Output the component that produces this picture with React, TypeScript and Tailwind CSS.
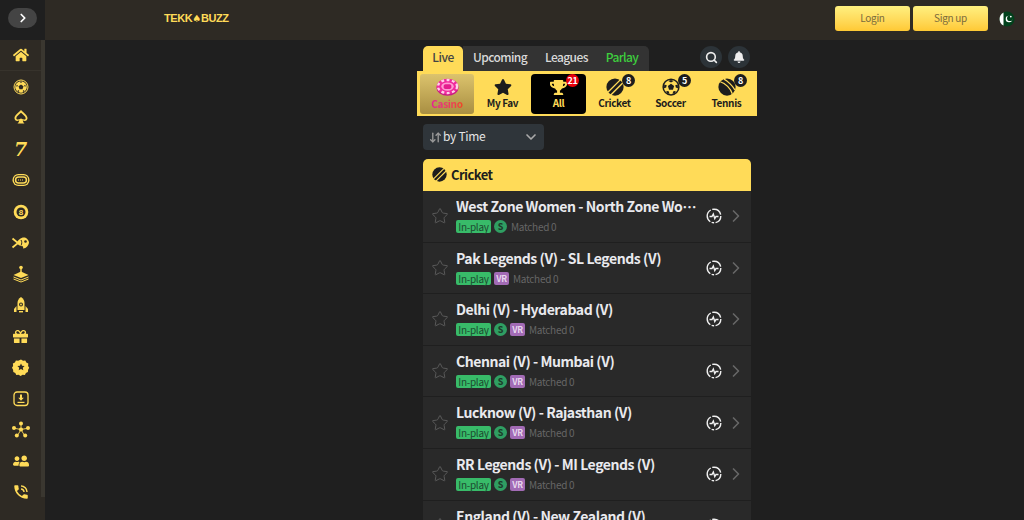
import { ChevronDown, ChevronRight, Search, Star, ArrowDownUp } from "lucide-react";
import { FaBell, FaHome, FaStar, FaGift, FaUserFriends, FaTrophy } from "react-icons/fa";
import { MdPhoneInTalk } from "react-icons/md";

const Y = "#ffdb58";

function CricketBall({ size = 18, color = "#1d1d1d", bg = Y }: { size?: number; color?: string; bg?: string }) {
  return (
    <svg width={size} height={size} viewBox="0 0 24 24">
      <circle cx="12" cy="12" r="11.5" fill={color} />
      <path d="M6 23 L23 6" stroke={bg} strokeWidth="1.8" />
      <path d="M2.5 19 L19 2.5" stroke={bg} strokeWidth="1.8" />
    </svg>
  );
}

function SoccerBall({ size = 18 }: { size?: number }) {
  return (
    <svg width={size} height={size} viewBox="0 0 24 24">
      <circle cx="12" cy="12" r="11.5" fill="#1d1d1d" />
      <circle cx="12" cy="12" r="9.5" fill={Y} />
      <path d="M12 7.5l4.2 3-1.6 5h-5.2l-1.600-5z" fill="#1d1d1d" />
      <path d="M12 2.500l3.500 1.600-3.500 2-3.500-2zM21 9l.4 4.500-3-1-.6-3.200zM3 9l-.4 4.500 3-1 .6-3.200zM7.500 21l-2-3.500 3-.3 1.600 3.300zM16.500 21l2-3.500-3-.3-1.600 3.300z" fill="#1d1d1d" />
    </svg>
  );
}

function TennisBall({ size = 18 }: { size?: number }) {
  return (
    <svg width={size} height={size} viewBox="0 0 24 24">
      <circle cx="12" cy="12" r="11.5" fill="#1d1d1d" />
      <path d="M3 5 C10 7 17 14 19 21" stroke={Y} strokeWidth="1.7" fill="none" />
      <path d="M8 1.500 C13 4 20 11 22.500 16" stroke={Y} strokeWidth="1.7" fill="none" />
    </svg>
  );
}

function CasinoChip() {
  return (
    <svg width="23" height="18" viewBox="0 0 24 18">
      <ellipse cx="12" cy="10" rx="11.500" ry="8" fill="#c81e82" />
      <ellipse cx="12" cy="8.500" rx="11.500" ry="8" fill="#f02a9c" />
      <ellipse cx="12" cy="8.500" rx="10" ry="6.800" fill="none" stroke="#ffd0ea" strokeWidth="2.400" strokeDasharray="3 2.500" />
      <ellipse cx="12" cy="8.500" rx="6.500" ry="4.300" fill="#ff9ad2" />
      <rect x="8" y="6" width="8" height="5" rx="1.800" fill="#e41d8e" />
    </svg>
  );
}

function LiveIcon() {
  return (
    <svg width="16" height="16" viewBox="0 0 16 16" fill="none" stroke="#f1f1f1">
      <circle cx="8" cy="8" r="6.800" strokeWidth="1.400" strokeDasharray="9 1.500 2.500 1.500 14 1.500 11 1.500" />
      <path d="M3.500 8.500h2.500l1.300-2.500 1.500 4.500 1.200-2h2.500" strokeWidth="1.400" />
    </svg>
  );
}

function PakFlag() {
  return (
    <svg width="16" height="16" viewBox="0 0 16 16">
      <circle cx="8" cy="8" r="7.500" fill="#01411c" />
      <path d="M4.500 1.400A7.500 7.500 0 0 0 4.500 14.600z" fill="#fff" />
      <circle cx="10" cy="8" r="3.300" fill="#fff" />
      <circle cx="11" cy="7.200" r="2.900" fill="#01411c" />
      <circle cx="11.800" cy="5.600" r=".9" fill="#fff" />
    </svg>
  );
}

const SvgIcon = ({ children }: { children: React.ReactNode }) => (
  <svg width={22} height={22} viewBox="0 0 22 22" fill={Y}>
    {children}
  </svg>
);

const sideIcons: React.ReactNode[] = [
  <FaHome key="home" size={16} color={Y} />,
  <SvgIcon key="ball">
    <circle cx="11" cy="11" r="7" fill="none" stroke={Y} strokeWidth="1" />
    <circle cx="11" cy="11" r="5.800" />
    <path d="M11 8.500l2.500 1.800-1 3h-3l-1-3z" fill="#2e2a24" />
    <path d="M11 5.500v1.200M6.500 9.500l1 .5M15.500 9.500l-1 .5M8 15.500l.8-1M14 15.500l-.8-1" stroke="#2e2a24" strokeWidth="1.400" />
  </SvgIcon>,
  <SvgIcon key="spade">
    <path d="M11 3c2.500 3 6.500 4.700 6.500 8.300 0 2.400-2.700 3.300-4.700 2 .1 1.200.5 2.200 1.700 3.200h-7c1.200-1 1.600-2 1.700-3.200-2 1.300-4.700.4-4.700-2C4.500 7.700 8.500 6 11 3z" />
    <path d="M11 5.800c1.800 1.900 4.700 3.400 4.700 5.400 0 1.500-2.200 1.700-4.700.3-2.500 1.400-4.700 1.200-4.700-.3 0-2 2.900-3.500 4.700-5.400z" fill="#2e2a24" />
  </SvgIcon>,
  <span key="seven" className="text-[19px] font-bold italic leading-[22px] text-[#ffdb58] font-['DejaVu_Serif',serif]">7</span>,
  <SvgIcon key="track">
    <rect x="2.500" y="5" width="17" height="12" rx="5.800" />
    <rect x="3.800" y="6.200" width="14.400" height="9.600" rx="4.700" fill="#2e2a24" />
    <rect x="4.800" y="7.200" width="12.400" height="7.600" rx="3.800" />
    <rect x="6.300" y="8.700" width="9.400" height="4.600" rx="2.300" fill="#2e2a24" />
    <path d="M8 11h6" stroke={Y} strokeWidth="1.200" strokeDasharray="1 1" />
  </SvgIcon>,
  <SvgIcon key="eight">
    <circle cx="11" cy="11" r="7.300" />
    <circle cx="11" cy="11" r="4.500" fill="#2e2a24" />
    <text x="11" y="14" textAnchor="middle" fontSize="8" fontWeight="700" fill={Y} fontFamily="Liberation Sans, sans-serif">8</text>
  </SvgIcon>,
  <SvgIcon key="fish">
    <path d="M2.500 6.500L8 11l-5.500 4.500" fill="none" stroke={Y} strokeWidth="1.800" />
    <path d="M6.500 11c1.500-3 4.200-5.500 7.500-5.500 2.800 0 4.700 2.700 5 5-.3 2.700-2.500 6-6 6 .3-1 .2-1.600-.3-2.200-2.700-.2-4.700-1.300-6.200-3.300z" />
    <circle cx="15.500" cy="9.500" r="1.300" fill="#2e2a24" />
    <path d="M11 8c1 1.500 1 3.800 0 5.500" stroke="#2e2a24" fill="none" />
  </SvgIcon>,
  <SvgIcon key="joystick">
    <circle cx="11" cy="4.500" r="1.800" />
    <rect x="10.300" y="5.500" width="1.400" height="5" />
    <path d="M3.500 12L11 8.500l7.500 3.500-7.500 3z" />
    <path d="M3.500 14L11 17l7.500-3M3.500 16L11 19l7.500-3" stroke={Y} fill="none" strokeWidth="1" />
  </SvgIcon>,
  <SvgIcon key="rocket">
    <path d="M11 3c2.300 1.600 3.500 3.800 3.500 6v7h-7V9c0-2.200 1.200-4.400 3.500-6z" />
    <circle cx="11" cy="10.500" r="2" fill="#2e2a24" />
    <circle cx="11" cy="10.500" r=".9" />
    <path d="M6.500 12v6H4v-3zM15.500 12v6H18v-3z" />
    <rect x="9" y="17" width="4" height="1.400" />
  </SvgIcon>,
  <FaGift key="gift" size={15} color={Y} />,
  <SvgIcon key="badge">
    <path d="M11 3.500l2 1.200 2.300-.2 1 2 2 1.100-.2 2.300 1.100 1.900-1.100 2-.2 2.200-2 1-1 2-2.300-.3-2 1.200-2-1.200-2.300.3-1-2-2-1-.2-2.200-1.100-2 1.100-1.900-.2-2.300 2-1.100 1-2 2.300.2z" />
    <path d="M11 7.500l1.100 2.300 2.500.3-1.800 1.700.5 2.500-2.300-1.200-2.300 1.200.5-2.500-1.800-1.700 2.500-.3z" fill="#2e2a24" />
  </SvgIcon>,
  <SvgIcon key="download">
    <rect x="4" y="4" width="14" height="13.500" rx="3" fill="none" stroke={Y} strokeWidth="1.300" />
    <path d="M10 6.500h2v3.300h1.800L11 12.700 8.200 9.800H10z" />
    <rect x="7.500" y="13.800" width="7" height="1.200" />
  </SvgIcon>,
  <SvgIcon key="network">
    <path d="M11 10.500V5M11 10.500L4.500 9.300M11 10.500l6.500-1.200M11 10.500L7.500 16.500M11 10.500l3.500 6" stroke={Y} strokeWidth=".9" />
    <circle cx="11" cy="10.500" r="2.100" />
    <circle cx="11" cy="4.500" r="2" />
    <circle cx="4" cy="9" r="2" />
    <circle cx="18" cy="9" r="2" />
    <circle cx="6.800" cy="16.500" r="2" />
    <circle cx="15.200" cy="16.500" r="2" />
  </SvgIcon>,
  <FaUserFriends key="users" size={16} color={Y} className="-scale-x-100" />,
  <MdPhoneInTalk key="phone" size={18} color={Y} />,
];

const tiles = [
  { label: "My Fav", icon: <FaStar size={18} color="#1d1d1d" />, tileClass: "", textClass: "text-[#1d1d1d]" },
  {
    label: "All",
    icon: <FaTrophy size={17} color={Y} />,
    badge: "21",
    badgeClass: "bg-[#e8000c] text-white",
    tileClass: "bg-black rounded-[4px]",
    textClass: "text-[#ffdb58]",
  },
  { label: "Cricket", icon: <CricketBall />, badge: "8", badgeClass: "bg-[#1d1d1d] text-white", tileClass: "", textClass: "text-[#1d1d1d]" },
  { label: "Soccer", icon: <SoccerBall />, badge: "5", badgeClass: "bg-[#1d1d1d] text-white", tileClass: "", textClass: "text-[#1d1d1d]" },
  { label: "Tennis", icon: <TennisBall />, badge: "8", badgeClass: "bg-[#1d1d1d] text-white", tileClass: "", textClass: "text-[#1d1d1d]" },
];

const matches = [
  { title: "West Zone Women - North Zone Women", s: true, vr: false },
  { title: "Pak Legends (V) - SL Legends (V)", s: false, vr: true },
  { title: "Delhi (V) - Hyderabad (V)", s: true, vr: true },
  { title: "Chennai (V) - Mumbai (V)", s: true, vr: true },
  { title: "Lucknow (V) - Rajasthan (V)", s: true, vr: true },
  { title: "RR Legends (V) - MI Legends (V)", s: true, vr: true },
  { title: "England (V) - New Zealand (V)", s: true, vr: true },
];

function MatchRow({ title, s, vr }: { title: string; s: boolean; vr: boolean }) {
  return (
    <div className="flex h-[51.600px] shrink-0 items-center border-b border-[#1f1f1f] bg-[#292929] pl-[8px] pr-[5px]">
      <Star size={18} strokeWidth={1.300} className="mr-[7px] shrink-0 text-[#5a5a5a]" />
      <div className="w-[244px] shrink-0 self-start pt-[3px]">
        <div className="truncate text-[14px] font-bold leading-[25px] tracking-[-0.44px] text-[#e9e9ee]">{title}</div>
        <div className="flex h-[15px] items-center gap-[3px] text-[10px] leading-[13px] tracking-[-0.3px]">
          <span className="w-[35px] rounded-[2px] bg-[#38bb69] text-center text-[#1d4a30]">In-play</span>
          {s && (
            <span className="flex h-[13px] w-[13px] items-center justify-center rounded-full bg-[#2f9e62] text-[9px] font-bold text-[#1c3b29]">
              S
            </span>
          )}
          {vr && (
            <span className="flex h-[13px] w-[15px] items-center justify-center rounded-[2px] bg-[#a26bb5] text-[8.500px] font-bold text-[#e8d9ee]">
              VR
            </span>
          )}
          <span className="ml-[1px] text-[#666]">Matched 0</span>
        </div>
      </div>
      <div className="ml-auto flex items-center gap-[4px]">
        <LiveIcon />
        <ChevronRight size={20} strokeWidth={2} className="text-[#666]" />
      </div>
    </div>
  );
}

export default function App() {
  return (
    <div className="flex h-[520px] flex-col overflow-hidden bg-[#1f1f1f] font-['Noto_Sans_CJK_KR',sans-serif]">
      <header className="flex h-10 shrink-0 items-center bg-[#2e2a24]">
        <div className="flex h-10 w-[45px] shrink-0 items-center justify-center bg-[#1f1f1f] pb-[4px]">
          <button className="flex h-5 w-[29px] items-center justify-center rounded-full bg-[#444]">
            <ChevronRight size={14} strokeWidth={3} className="text-white" />
          </button>
        </div>
        <div className="mb-[3px] ml-[119px] text-[11px] font-black leading-none tracking-[-0.4px] text-[#ffdb58] font-['Liberation_Sans',sans-serif]">
          TEKK<span className="font-['DejaVu_Sans',sans-serif] text-[10px]">♠</span>BUZZ
        </div>
        <div className="mb-[3px] ml-auto flex items-center gap-[3px] pr-[9px]">
          <button className="h-[25px] w-[75px] rounded-[3px] bg-gradient-to-b from-[#fff07f] to-[#ffc933] pb-[2px] text-[10px] tracking-[-0.3px] text-[#7a6a3c]">
            Login
          </button>
          <button className="h-[25px] w-[75px] rounded-[3px] bg-gradient-to-b from-[#fff07f] to-[#ffc933] pb-[2px] text-[10px] tracking-[-0.3px] text-[#7a6a3c]">
            Sign up
          </button>
          <span className="ml-[8px]">
            <PakFlag />
          </span>
        </div>
      </header>
      <div className="flex min-h-0 flex-1">
        <aside className="relative w-[45px] shrink-0 bg-[#2e2a24]">
          {sideIcons.map((icon, i) => (
            <div
              key={i}
              className={
                i === 0
                  ? "flex h-[31.200px] w-[41px] items-center justify-center border-b border-[#37332c]"
                  : "flex h-[31.200px] w-[41px] items-center justify-center"
              }
            >
              {icon}
            </div>
          ))}
          <div className="absolute right-0 top-0 h-[457px] w-1 bg-[#3a3730]" />
        </aside>
        <main className="ml-[372px] w-[340px] shrink-0">
          <div className="flex h-[31px] items-end px-[6px]">
            <div className="flex h-[25px] w-10 items-center justify-center rounded-t-[5px] bg-[#ffdb58] pb-[3px] text-[12px] font-medium tracking-[-0.5px] text-[#444]">
              Live
            </div>
            <div className="flex h-[25px] w-[186px] items-center rounded-tr-[5px] bg-[#333] pb-[3px] pl-[10px] text-[12px] font-medium tracking-[-0.6px] text-[#d9d9d9]">
              <span>Upcoming</span>
              <span className="ml-[18px]">Leagues</span>
              <span className="ml-[18px] text-[#3ecf3e]">Parlay</span>
            </div>
            <div className="mb-[3px] ml-auto flex gap-[6px] pr-[1px]">
              <button className="flex h-[22px] w-[22px] items-center justify-center rounded-full bg-[#2c3338]">
                <Search size={13} strokeWidth={3} className="text-[#eee]" />
              </button>
              <button className="flex h-[22px] w-[22px] items-center justify-center rounded-full bg-[#2c3338]">
                <FaBell size={12} color="#eee" />
              </button>
            </div>
          </div>
          <div className="flex h-[45px] items-center bg-[#ffdb58] px-[3px]">
            <div className="flex h-[40px] w-[54px] flex-col items-center rounded-[3px] bg-gradient-to-b from-[#dcc36d] to-[#a98f42]">
              <div className="flex h-[24px] items-center pt-[3px]">
                <CasinoChip />
              </div>
              <span className="bg-gradient-to-r from-[#e9169a] to-[#f0461e] bg-clip-text text-[10px] font-bold leading-[11px] tracking-[-0.3px] text-transparent">
                Casino
              </span>
            </div>
            {tiles.map((t) => (
              <div key={t.label} className={`relative ml-[1px] flex h-[40px] w-[55px] flex-col items-center ${t.tileClass}`}>
                <div className="flex h-[24px] items-center pt-[3px]">{t.icon}</div>
                <span className={`text-[10px] font-bold leading-[10px] tracking-[-0.35px] ${t.textClass}`}>{t.label}</span>
                {t.badge && (
                  <span
                    className={`absolute right-[7px] top-0 flex h-[13px] min-w-[13px] items-center justify-center rounded-full text-[9px] font-bold leading-none tracking-[-0.3px] ${t.badgeClass}`}
                  >
                    {t.badge}
                  </span>
                )}
              </div>
            ))}
          </div>
          <div className="ml-[6px] mt-[8px] flex h-[26px] w-[121px] items-center rounded-[4px] bg-[#2f353a] pl-[6px] pr-[5px] text-[12px] tracking-[-0.3px] text-[#e5e5e5]">
            <ArrowDownUp size={13} strokeWidth={2.500} className="mr-[1px] text-[#9a9a9a]" />
            <span className="pb-[2px]">by Time</span>
            <ChevronDown size={16} strokeWidth={2.500} className="ml-auto text-[#aaa]" />
          </div>
          <div className="mx-[6px] mt-[9px] flex h-[32px] items-center gap-[4px] rounded-t-[5px] bg-[#ffdb58] pb-[1px] pl-[9px] text-[13px] font-bold tracking-[-0.55px] text-[#1d1d1d]">
            <CricketBall size={15} />
            Cricket
          </div>
          <div className="mx-[6px] flex flex-col">
            {matches.map((m) => (
              <MatchRow key={m.title} {...m} />
            ))}
          </div>
        </main>
      </div>
    </div>
  );
}
